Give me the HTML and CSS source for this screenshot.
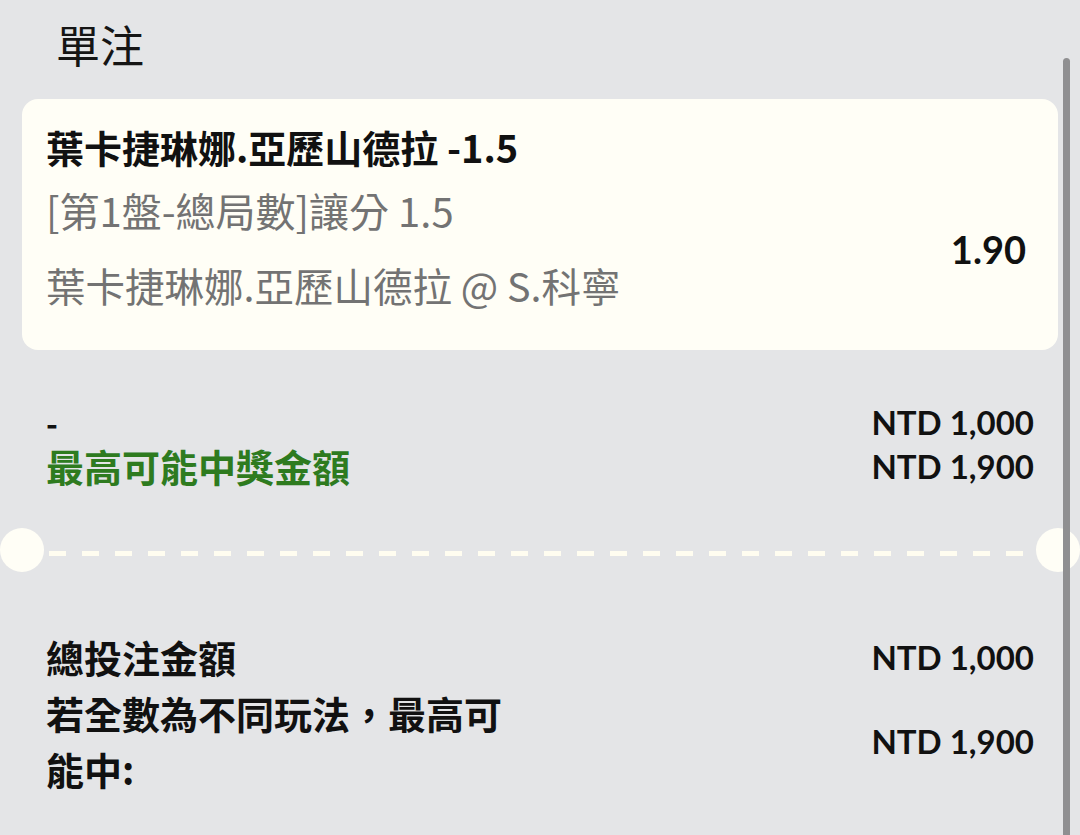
FILE: index.html
```html
<!DOCTYPE html>
<html>
	<head>
		<meta charset="utf-8">
		<title>單注</title>
		<link rel="stylesheet" href="styles.css">
	</head>
	<body>
		<div class="slip">
			<div class="title">單注</div>
			<div class="card">
				<div class="selection">葉卡捷琳娜.亞歷山德拉 -1.5</div>
				<div class="card-row">
					<div class="card-info">
						<div class="market">[第1盤-總局數]讓分 1.5</div>
						<div class="event">葉卡捷琳娜.亞歷山德拉 @ S.科寧</div>
					</div>
					<div class="odds">1.90</div>
				</div>
			</div>
			<div class="stake">
				<div class="row">
					<span class="dash-label">-</span>
					<span class="amount">NTD 1,000</span>
				</div>
				<div class="row">
					<span class="win-label">最高可能中獎金額</span>
					<span class="amount">NTD 1,900</span>
				</div>
			</div>
			<div class="divider">
				<div class="notch"></div>
				<div class="dashes"></div>
				<div class="notch"></div>
			</div>
			<div class="summary">
				<div class="row">
					<span class="label">總投注金額</span>
					<span class="amount">NTD 1,000</span>
				</div>
				<div class="row">
					<span class="label wrap">若全數為不同玩法，最高可能中:</span>
					<span class="amount">NTD 1,900</span>
				</div>
			</div>
		</div>
		<div class="scrollbar"></div>
	</body>
</html>
```

FILE: styles.css
```css
html, body {
	height: 100%;
	margin: 0;
}
body {
	background-color: #e4e5e7;
	font-family: "Noto Sans CJK TC", "Noto Sans", sans-serif;
	color: #111111;
	overflow: hidden;
}
.slip {
	padding: 0 22px;
}
.title {
	padding-left: 34px;
	font-size: 44px;
	line-height: 88px;
	color: #151515;
}
.card {
	margin-top: 11px;
	padding: 19px 32px 24px 24px;
	background-color: #fffef6;
	border-radius: 16px;
}
.selection {
	font-size: 38px;
	font-weight: bold;
	line-height: 58px;
}
.card-row {
	display: flex;
	justify-content: space-between;
	align-items: center;
}
.market {
	font-size: 40px;
	line-height: 68px;
	color: #737373;
}
.event {
	font-size: 39.5px;
	line-height: 82px;
	color: #737373;
}
.odds {
	font-family: "Lato", sans-serif;
	font-weight: bold;
	font-size: 38px;
	margin-top: -4px;
}
.stake {
	margin-top: 50px;
	padding: 0 24px;
}
.stake .row {
	display: flex;
	justify-content: space-between;
	align-items: center;
	height: 44px;
}
.dash-label {
	font-size: 32px;
	font-weight: bold;
	line-height: 40px;
}
.win-label {
	font-size: 38px;
	font-weight: bold;
	line-height: 44px;
	color: #2e7b1f;
}
.amount {
	font-family: "Lato", sans-serif;
	font-weight: bold;
	font-size: 33px;
}
.divider {
	display: flex;
	align-items: center;
	margin: 40px -22px 0;
}
.notch {
	width: 44px;
	height: 44px;
	border-radius: 50%;
	background-color: #fffef6;
}
.dashes {
	flex: 1;
	height: 5px;
	margin: 6px 5px 0;
	background-image: repeating-linear-gradient(to right, #fffdf0 0, #fffdf0 17px, transparent 17px, transparent 33px);
}
.summary {
	margin-top: 57px;
	padding: 0 24px;
}
.summary .row {
	display: flex;
	justify-content: space-between;
	align-items: center;
	line-height: 56px;
}
.label {
	font-size: 38px;
	font-weight: bold;
}
.wrap {
	width: 470px;
}
.scrollbar {
	position: absolute;
	top: 58px;
	left: 1063px;
	width: 7px;
	height: 800px;
	border-radius: 4px 4px 0 0;
	background-color: #8f8f91;
}
```
